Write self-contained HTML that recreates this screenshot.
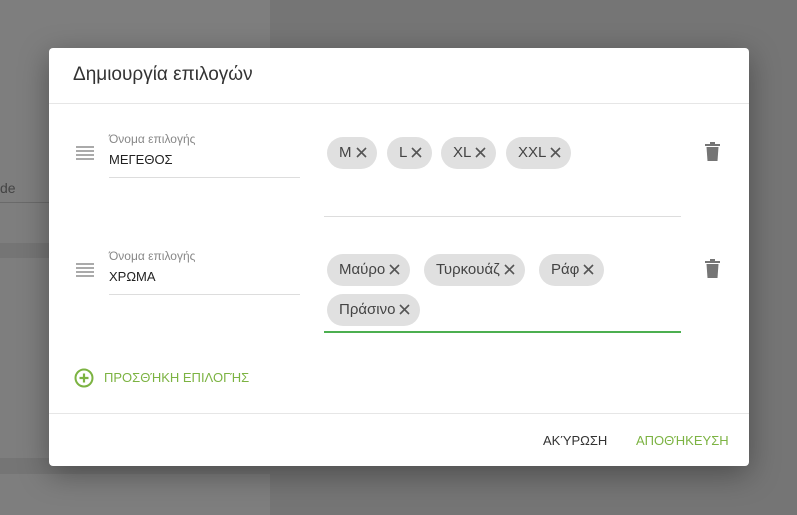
<!DOCTYPE html>
<html><head><meta charset="utf-8"><style>
*{box-sizing:border-box;margin:0;padding:0}
body{width:797px;height:515px;background:#757575;position:relative;overflow:hidden;font-family:"Liberation Sans","DejaVu Sans",sans-serif}
.bgp{position:absolute;background:#7e7e7e}
.dlg{position:absolute;left:49px;top:48px;width:700px;height:418px;background:#fff;border-radius:4px;box-shadow:0 8px 30px rgba(0,0,0,.35)}
.title{position:absolute;left:24px;top:16px;font-size:19px;color:#333}
.hr{position:absolute;left:0;right:0;height:1px;background:#e6e6e6}
.drag{position:absolute;left:27px;width:18px}
.drag i{display:block;height:2px;background:#aaa;margin-bottom:2px}
.lbl{position:absolute;left:60px;font-size:12px;color:#888}
.val{position:absolute;left:60px;font-size:13px;color:#222}
.ul{position:absolute;left:60px;width:191px;height:1px;background:#ddd}
.chip{position:absolute;height:32px;line-height:32px;background:#e0e0e0;border-radius:16px;padding:0 10px 0 12px;font-size:15px;color:#444;white-space:nowrap}
.chip svg{display:inline-block;vertical-align:middle;margin-left:4px;margin-top:-2px}
.trash{position:absolute;left:656px}
</style></head><body>
<div class="bgp" style="left:0;top:0;width:270px;height:243px"></div>
<div class="bgp" style="left:0;top:258px;width:270px;height:200px"></div>
<div class="bgp" style="left:0;top:474px;width:270px;height:41px"></div>
<div style="position:absolute;left:0;top:180px;font-size:14px;color:#444">de</div>
<div style="position:absolute;left:0;top:202px;width:50px;height:1px;background:#6a6a6a"></div>
<div class="dlg">
<div class="title">Δημιουργία επιλογών</div>
<div class="hr" style="top:55px"></div>

<div class="drag" style="top:98px"><i></i><i></i><i></i><i></i></div>
<div class="lbl" style="top:84px">Όνομα επιλογής</div>
<div class="val" style="top:104px">ΜΕΓΕΘΟΣ</div>
<div class="ul" style="top:129px"></div>
<div class="chip" style="left:278px;top:89px">M<svg width="11" height="11"><path d="M1 1L10 10M10 1L1 10" stroke="#555" stroke-width="1.6"/></svg></div>
<div class="chip" style="left:338px;top:89px">L<svg width="11" height="11"><path d="M1 1L10 10M10 1L1 10" stroke="#555" stroke-width="1.6"/></svg></div>
<div class="chip" style="left:392px;top:89px">XL<svg width="11" height="11"><path d="M1 1L10 10M10 1L1 10" stroke="#555" stroke-width="1.6"/></svg></div>
<div class="chip" style="left:457px;top:89px">XXL<svg width="11" height="11"><path d="M1 1L10 10M10 1L1 10" stroke="#555" stroke-width="1.6"/></svg></div>
<div style="position:absolute;left:275px;top:168px;width:357px;height:1px;background:#ddd"></div>
<svg class="trash" style="top:94px" width="15" height="19" viewBox="0 0 15 19"><rect x="0" y="2" width="15" height="2" fill="#757575"/><rect x="5" y="0" width="5" height="3" fill="#757575"/><path d="M1.5 5h12l-1 14h-10z" fill="#757575"/></svg>

<div class="drag" style="top:215px"><i></i><i></i><i></i><i></i></div>
<div class="lbl" style="top:201px">Όνομα επιλογής</div>
<div class="val" style="top:221px">ΧΡΩΜΑ</div>
<div class="ul" style="top:246px"></div>
<div class="chip" style="left:278px;top:206px">Μαύρο<svg width="11" height="11"><path d="M1 1L10 10M10 1L1 10" stroke="#555" stroke-width="1.6"/></svg></div>
<div class="chip" style="left:375px;top:206px">Τυρκουάζ<svg width="11" height="11"><path d="M1 1L10 10M10 1L1 10" stroke="#555" stroke-width="1.6"/></svg></div>
<div class="chip" style="left:490px;top:206px">Ράφ<svg width="11" height="11"><path d="M1 1L10 10M10 1L1 10" stroke="#555" stroke-width="1.6"/></svg></div>
<div class="chip" style="left:278px;top:246px">Πράσινο<svg width="11" height="11"><path d="M1 1L10 10M10 1L1 10" stroke="#555" stroke-width="1.6"/></svg></div>
<div style="position:absolute;left:275px;top:283px;width:357px;height:2px;background:#4caf50"></div>
<svg class="trash" style="top:211px" width="15" height="19" viewBox="0 0 15 19"><rect x="0" y="2" width="15" height="2" fill="#757575"/><rect x="5" y="0" width="5" height="3" fill="#757575"/><path d="M1.5 5h12l-1 14h-10z" fill="#757575"/></svg>

<svg style="position:absolute;left:25px;top:320px" width="20" height="20" viewBox="0 0 20 20"><circle cx="10" cy="10" r="8.5" fill="none" stroke="#7cb342" stroke-width="2"/><path d="M10 5.5v9M5.5 10h9" stroke="#7cb342" stroke-width="2.2"/></svg>
<div style="position:absolute;left:55px;top:322px;font-size:13px;color:#7cb342">ΠΡΟΣΘΉΚΗ ΕΠΙΛΟΓΉΣ</div>
<div class="hr" style="top:365px"></div>
<div style="position:absolute;left:494px;top:385px;font-size:13px;color:#333">ΑΚΎΡΩΣΗ</div>
<div style="position:absolute;left:587px;top:385px;font-size:13px;color:#7cb342">ΑΠΟΘΉΚΕΥΣΗ</div>
</div>
</body></html>
